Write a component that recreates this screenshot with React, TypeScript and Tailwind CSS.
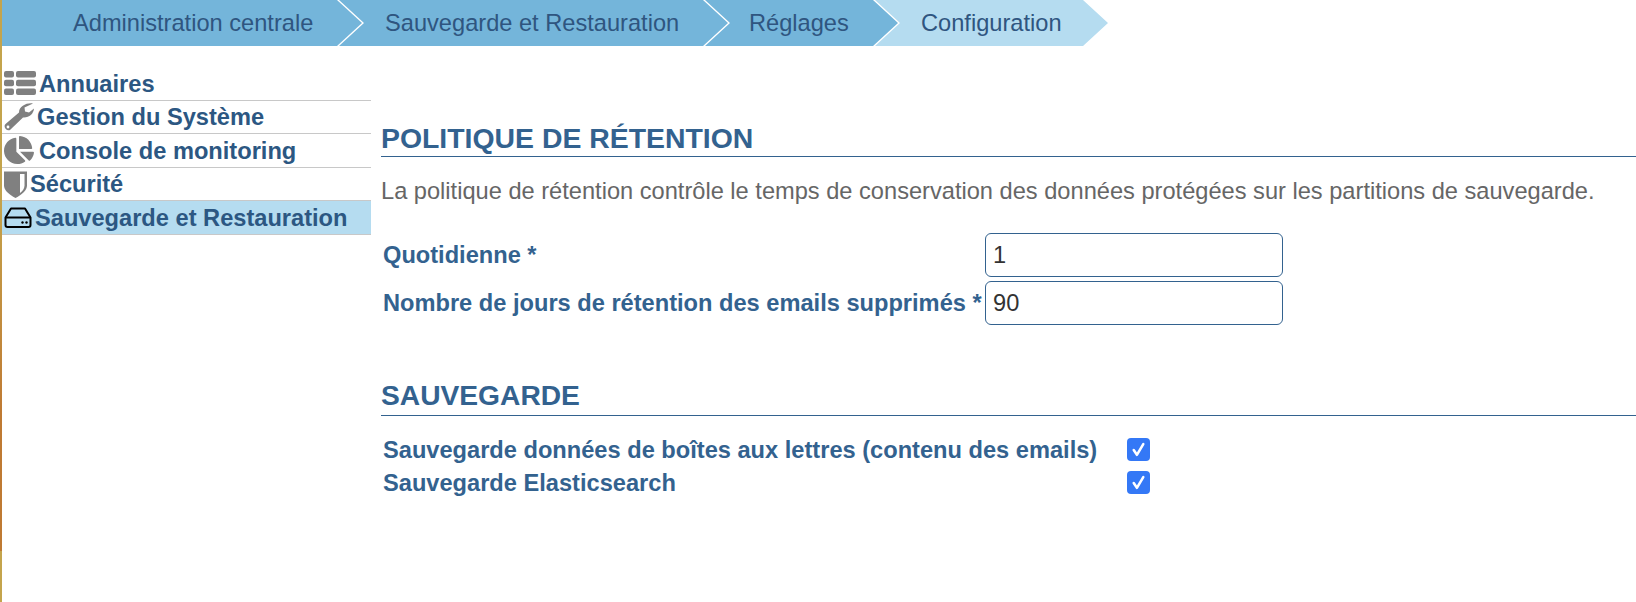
import React from "react";
import { FaChartPie } from "react-icons/fa";

const crumbs = [
  { label: "Administration centrale", cls: "w-[360px] pl-[71px] [clip-path:polygon(0_0,calc(100%-25px)_0,100%_50%,calc(100%-25px)_100%,0_100%)] bg-[#74b5da]" },
  { label: "Sauvegarde et Restauration", cls: "w-[389px] -ml-[23px] pl-[46px] [clip-path:polygon(0_0,calc(100%-25px)_0,100%_50%,calc(100%-25px)_100%,0_100%,25px_50%)] bg-[#74b5da]" },
  { label: "Réglages", cls: "w-[193px] -ml-[23px] pl-[44px] [clip-path:polygon(0_0,calc(100%-25px)_0,100%_50%,calc(100%-25px)_100%,0_100%,25px_50%)] bg-[#74b5da]" },
  { label: "Configuration", cls: "w-[233px] -ml-[23px] pl-[46px] [clip-path:polygon(0_0,calc(100%-25px)_0,100%_50%,calc(100%-25px)_100%,0_100%,25px_50%)] bg-[#b5dcf0]" },
];

const ListIcon = () => (
  <svg viewBox="0 0 32 24" className="w-[32px] h-[24px] shrink-0" fill="#808080">
    <rect x="0" y="0" width="10" height="6.500" rx="2" />
    <rect x="12" y="0" width="20" height="6.500" rx="2" />
    <rect x="0" y="8.700" width="10" height="6.500" rx="2" />
    <rect x="12" y="8.700" width="20" height="6.500" rx="2" />
    <rect x="0" y="17.500" width="10" height="6.500" rx="2" />
    <rect x="12" y="17.500" width="20" height="6.500" rx="2" />
  </svg>
);

const WrenchIcon = () => (
  <svg viewBox="0 0 30 28" className="w-[30px] h-[28px] shrink-0" fill="#808080">
    <path d="M29 .5C23-.5 15 3 15 9.500L1.500 21C-1.500 24 3.500 29.500 6.500 26.500L19 14.500C25 15 29.500 11 30 5.500L25 9.500 21 8.500 20.500 4.500z" />
    <circle cx="4" cy="24" r="1.400" fill="#fff" />
  </svg>
);

const ShieldIcon = () => (
  <svg viewBox="0 0 23 28" className="w-[23px] h-[28px] shrink-0" fill="#808080">
    <path d="M0 1.500h23v14c0 5-5 9-11.500 12.500C5 24.500 0 20.500 0 15.500z" />
    <path d="M16 4h4.500v11.500c0 3-2 5.500-4.500 7.500z" fill="#fff" />
  </svg>
);

const DriveIcon = () => (
  <svg viewBox="0 0 28 21" className="w-[28px] h-[21px] shrink-0" fill="none" stroke="#000" strokeWidth="2">
    <path d="M7 1.500h14l5.500 9v7.500a2 2 0 0 1-2 2h-21a2 2 0 0 1-2-2v-7.500z" strokeLinejoin="round" />
    <path d="M1.500 10.500h25" />
    <circle cx="18.500" cy="15.500" r="1.200" fill="#000" stroke="none" />
    <circle cx="22.500" cy="15.500" r="1.200" fill="#000" stroke="none" />
  </svg>
);

const CheckBox = () => (
  <span className="w-[23px] h-[23px] rounded-[4px] bg-[#3478f6] flex items-center justify-center">
    <svg viewBox="0 0 16 16" className="w-[17px] h-[17px]" fill="none" stroke="#fff" strokeWidth="2.400" strokeLinecap="round" strokeLinejoin="round">
      <path d="M3.500 8.500 6.500 13 12.500 3" />
    </svg>
  </span>
);

const menu = [
  { label: "Annuaires", icon: <ListIcon />, gap: "gap-[3px]", active: false },
  { label: "Gestion du Système", icon: <WrenchIcon />, gap: "gap-[3px]", active: false },
  { label: "Console de monitoring", icon: <FaChartPie className="w-[30px] h-[30px] text-[#808080] shrink-0" />, gap: "gap-[5px]", active: false },
  { label: "Sécurité", icon: <ShieldIcon />, gap: "gap-[3px]", active: false },
  { label: "Sauvegarde et Restauration", icon: <DriveIcon />, gap: "gap-[3px]", active: true },
];

export default function App() {
  return (
    <div className="flex h-[602px] w-[1636px] overflow-hidden bg-white font-['Liberation_Sans',Arial,sans-serif]">
      <div className="w-[2px] shrink-0 flex flex-col">
        <div className="h-[551px] bg-linear-to-b from-[#c4a44c] from-[35%] to-[#bf7a33] to-[75%]" />
        <div className="flex-1 bg-[#c4a44c]" />
      </div>
      <div className="flex-1 min-w-0 flex flex-col">
        <div className="flex h-[46px]">
          {crumbs.map((c) => (
            <div key={c.label} className={`h-[46px] shrink-0 flex items-center pt-[2px] text-[23.630px] text-[#2f5580] ${c.cls}`}>
              {c.label}
            </div>
          ))}
        </div>
        <div className="flex flex-1 min-h-0">
          <div className="w-[369px] shrink-0 pt-[21px]">
            {menu.map((m) => (
              <div
                key={m.label}
                className={`h-[33.500px] flex items-center border-b border-[#c8c8c8] pl-[2px] text-[23.630px] font-bold text-[#2c5782] ${m.gap} ${m.active ? "bg-[#b5dcf0]" : ""}`}
              >
                {m.icon}
                <span className="pt-[2px]">{m.label}</span>
              </div>
            ))}
          </div>
          <div className="flex-1 min-w-0 pl-[10px] pt-[76px]">
            <h2 className="text-[28.400px] font-bold leading-[32px] text-[#33628f] border-b border-[#33628f] h-[35px]">
              POLITIQUE DE RÉTENTION
            </h2>
            <p className="mt-[19px] text-[23.630px] leading-[30px] text-[#666666] whitespace-nowrap">
              La politique de rétention contrôle le temps de conservation des données protégées sur les partitions de sauvegarde.
            </p>
            <div className="mt-[27px] flex flex-col gap-[4px]">
              {[
                { label: "Quotidienne *", value: "1" },
                { label: "Nombre de jours de rétention des emails supprimés *", value: "90" },
              ].map((r) => (
                <div key={r.label} className="flex items-center">
                  <label className="w-[604px] pl-[2px] pt-[2px] text-[23.630px] font-bold text-[#33628f] whitespace-nowrap">{r.label}</label>
                  <input
                    defaultValue={r.value}
                    className="w-[298px] h-[44px] rounded-[6px] border border-[#33628f] px-[7px] text-[23.630px] text-[#333333] outline-none"
                  />
                </div>
              ))}
            </div>
            <h2 className="mt-[52px] text-[28.200px] font-bold leading-[37px] text-[#33628f] border-b border-[#33628f] h-[39px]">
              SAUVEGARDE
            </h2>
            <div className="mt-[22px] flex flex-col gap-[10px]">
              {["Sauvegarde données de boîtes aux lettres (contenu des emails)", "Sauvegarde Elasticsearch"].map((l) => (
                <div key={l} className="flex items-center h-[23px]">
                  <span className="w-[746px] pl-[2px] pt-[2px] text-[23.630px] font-bold text-[#33628f] whitespace-nowrap">{l}</span>
                  <CheckBox />
                </div>
              ))}
            </div>
          </div>
        </div>
      </div>
    </div>
  );
}
